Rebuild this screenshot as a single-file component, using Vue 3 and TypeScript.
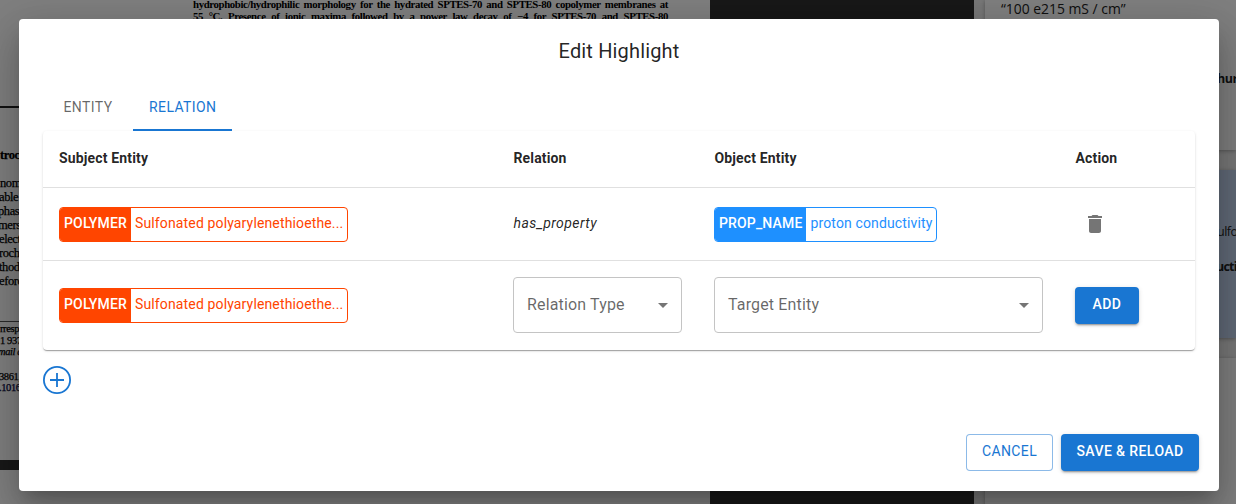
<script setup lang="ts">
interface Tag { kind: string; text: string; tone: string }
interface Fragment { text: string; top: number; left: number; style: string }

const polymer: Tag = { kind: 'POLYMER', text: 'Sulfonated polyarylenethioethe...', tone: 'orange' }
const property: Tag = { kind: 'PROP_NAME', text: 'proton conductivity', tone: 'blue' }

const fragments: Fragment[] = [
  { text: 'troc', top: 147, left: 0, style: 'strong' },
  { text: 'nom', top: 175, left: 0, style: '' },
  { text: 'able', top: 189, left: -1, style: '' },
  { text: 'phas', top: 203, left: -2, style: '' },
  { text: 'mers', top: 217, left: -2, style: '' },
  { text: 'elect', top: 231, left: -1, style: '' },
  { text: 'roch', top: 245, left: -1, style: '' },
  { text: 'thod', top: 259, left: -1, style: '' },
  { text: 'efore', top: 273, left: -1, style: '' },
  { text: 'rresp', top: 322, left: 0, style: 'small' },
  { text: '1 937', top: 334, left: 0, style: 'small' },
  { text: 'mail a', top: 345, left: -2, style: 'small slanted' },
  { text: '3861,', top: 370, left: -1, style: 'small' },
  { text: '.1016', top: 381, left: -1, style: 'small navy' },
]
</script>

<template>
  <div class="screen">
    <div class="backdrop">
      <div class="document">
        <div class="sheet">
          <p class="abstract first">hydrophobic/hydrophilic morphology for the hydrated SPTES-70 and SPTES-80 copolymer membranes at</p>
          <p class="abstract">55 °C. Presence of ionic maxima followed by a power law decay of −4 for SPTES-70 and SPTES-80</p>
          <i class="rule heavy"></i>
          <i class="rule light"></i>
          <span
            v-for="f in fragments" :key="f.top" class="fragment" :class="f.style"
            :style="{ top: f.top + 'px', left: f.left + 'px' }"
          >{{ f.text }}</span>
        </div>
        <div class="sheet next"></div>
      </div>
      <div class="gutter"></div>
      <div class="notes">
        <div class="note one">
          <span class="quote">“100 e215 mS / cm”</span>
          <b class="edge hun">hur</b>
        </div>
        <div class="note two">
          <span class="edge ulf">ulfo</span>
          <b class="edge ucti">ucti</b>
        </div>
        <div class="note three"></div>
      </div>
      <div class="shade"></div>
    </div>

    <section class="dialog">
      <h2>Edit Highlight</h2>
      <div class="content">
        <nav class="tabs">
          <button class="tab">ENTITY</button>
          <button class="tab active">RELATION</button>
        </nav>
        <div class="table">
          <div class="row head">
            <span>Subject Entity</span><span>Relation</span><span>Object Entity</span><span>Action</span>
          </div>
          <div class="row data">
            <div><span class="tag" :class="polymer.tone"><b>{{ polymer.kind }}</b><span>{{ polymer.text }}</span></span></div>
            <em>has_property</em>
            <div><span class="tag" :class="property.tone"><b>{{ property.kind }}</b><span>{{ property.text }}</span></span></div>
            <div>
              <svg class="trash" viewBox="0 0 24 24"><path d="M6 19c0 1.1.9 2 2 2h8c1.1 0 2-.9 2-2V7H6v12zM19 4h-3.5l-1-1h-5l-1 1H5v2h14V4z" /></svg>
            </div>
          </div>
          <div class="row form">
            <div><span class="tag" :class="polymer.tone"><b>{{ polymer.kind }}</b><span>{{ polymer.text }}</span></span></div>
            <div class="select">Relation Type<svg viewBox="0 0 24 24"><path d="M7 10l5 5 5-5z" /></svg></div>
            <div class="select">Target Entity<svg viewBox="0 0 24 24"><path d="M7 10l5 5 5-5z" /></svg></div>
            <div><button class="btn filled add">ADD</button></div>
          </div>
        </div>
        <svg class="plus" viewBox="0 0 28 28">
          <circle cx="14" cy="14" r="13.1" />
          <path d="M14 7v14M7 14h14" />
        </svg>
      </div>
      <footer>
        <button class="btn outlined">CANCEL</button>
        <button class="btn filled save">SAVE &amp; RELOAD</button>
      </footer>
    </section>
  </div>
</template>

<style>
body { margin: 0; overflow: hidden; }
</style>

<style scoped>
* { box-sizing: border-box; }
.screen { position: relative; width: 1236px; height: 504px; overflow: hidden; font-family: Roboto, "Liberation Sans", sans-serif; color: rgba(0, 0, 0, 0.87); }
.backdrop { position: absolute; inset: 0; display: flex; background: #fff; }
.shade { position: absolute; inset: 0; background: rgba(0, 0, 0, 0.5); }
.document { width: 710px; display: flex; flex-direction: column; gap: 10px; background: #303030; }
.sheet { position: relative; height: 460px; background: #fff; overflow: hidden; }
.sheet.next { height: 34px; }
.abstract { margin: 0 0 0 193px; width: 475px; height: 12px; font: bold 10.8px/12px "Liberation Serif", serif; letter-spacing: -0.37px; color: #000; text-align: justify; text-align-last: justify; }
.abstract.first { margin-top: -2px; }
.rule { position: absolute; left: 0; width: 40px; }
.rule.heavy { top: 106px; height: 2px; background: #222; }
.rule.light { top: 321px; height: 1px; background: #555; }
.fragment { position: absolute; font: 12.5px/16px "Liberation Serif", serif; letter-spacing: -0.4px; color: #000; white-space: nowrap; -webkit-text-stroke: 0.25px #000; }
.fragment.strong { font-weight: bold; }
.fragment.small { font-size: 10.5px; line-height: 14px; letter-spacing: -0.4px; }
.fragment.slanted { font-style: italic; }
.fragment.navy { color: #000070; }
.gutter { width: 264px; background: #303030; }
.notes { flex: 1; padding-left: 11px; background: #f0f0f0; font-family: "Open Sans", "Noto Sans", sans-serif; font-size: 12.5px; color: #222; }
.note { position: relative; background: #fff; box-shadow: 0 1px 4px rgba(0, 0, 0, 0.3); }
.note.one { height: 150px; }
.note.two { height: 168px; margin-top: 20px; background: #c3d4f0; }
.note.three { height: 150px; margin-top: 20px; }
.quote { position: absolute; left: 16px; top: 0; font-size: 13.9px; line-height: 18px; white-space: nowrap; }
.edge { position: absolute; left: 232px; white-space: nowrap; line-height: 18px; letter-spacing: -0.5px; }
.hun { top: 70px; }
.ulf { top: 53px; }
.ucti { top: 88px; left: 231px; letter-spacing: -0.8px; }

.dialog { position: absolute; left: 19px; top: 19px; width: 1200px; height: 472px; display: flex; flex-direction: column; background: #fff; border-radius: 4px; box-shadow: 0 11px 15px -7px rgba(0, 0, 0, 0.2), 0 24px 38px 3px rgba(0, 0, 0, 0.14), 0 9px 46px 8px rgba(0, 0, 0, 0.12); }
h2 { margin: 0; height: 64px; padding-top: 16px; font-size: 20px; font-weight: 400; line-height: 32px; letter-spacing: 0.15px; text-align: center; }
.content { flex: 1; padding: 0 24px; }
.tabs { display: flex; height: 48px; }
.tab { height: 48px; padding: 0 16px; border: 0; background: none; font: 400 14px/20px Roboto, sans-serif; letter-spacing: 0.4px; color: rgba(0, 0, 0, 0.6); width: 90px; }
.tab.active { width: 99px; color: #1976d2; border-bottom: 2px solid #1976d2; padding-top: 2px; }
.table { height: 219px; border-radius: 4px; box-shadow: 0 2px 1px -1px rgba(0, 0, 0, 0.2), 0 1px 1px rgba(0, 0, 0, 0.14), 0 1px 3px rgba(0, 0, 0, 0.12); }
.row { display: grid; grid-template-columns: 422px 169px 329px 88px; column-gap: 32px; padding: 0 16px; align-items: center; font-size: 14px; line-height: 20px; letter-spacing: 0.15px; }
.row > div { display: flex; }
.head { height: 57px; font-weight: 700; border-bottom: 1px solid #e0e0e0; padding-bottom: 2px; }
.head span + span { padding-left: 0.5px; }
.data { height: 73px; border-bottom: 1px solid #e0e0e0; }
.data em { letter-spacing: 0.42px; padding: 0 0 2px 0.5px; }
.form { height: 89px; padding-bottom: 1px; }
.tag { display: inline-flex; height: 35px; border: 1px solid; border-radius: 4px; overflow: hidden; line-height: 31px; white-space: nowrap; }
.tag b { padding: 0 4px; font-weight: 500; color: #fff; }
.tag span { padding: 0 3.6px 0 4px; letter-spacing: 0.14px; }
.orange { color: #ff4500; width: 289px; }
.orange b { background: #ff4500; }
.blue { color: #1e90ff; }
.blue b { background: #1e90ff; }
.trash { width: 24px; height: 24px; margin-left: 8px; fill: #757575; }
.form .tag { margin-top: 1px; }
.select { height: 56px; align-items: center; justify-content: space-between; padding: 0 6px 0 13px; border: 1px solid #c4c4c4; border-radius: 4px; font-size: 16px; color: rgba(0, 0, 0, 0.6); }
.select svg { width: 24px; height: 24px; fill: #757575; }
.btn { display: block; height: 37px; padding: 0 0 3px; border: 0; border-radius: 4px; font: 500 14px/24px Roboto, sans-serif; letter-spacing: 0.4px; }
.filled { color: #fff; background: #1976d2; box-shadow: 0 3px 1px -2px rgba(0, 0, 0, 0.2), 0 2px 2px rgba(0, 0, 0, 0.14), 0 1px 5px rgba(0, 0, 0, 0.12); }
.add { width: 64px; margin-top: 1px; }
.save { width: 138px; }
.outlined { width: 87px; color: #1976d2; background: #fff; border: 1px solid rgba(25, 118, 210, 0.5); font-weight: 400; }
.plus { display: block; width: 28px; height: 28px; margin-top: 16px; fill: none; stroke: #1976d2; stroke-width: 1.8; }
footer { display: flex; justify-content: flex-end; gap: 8px; padding: 0 20px 20px; }
</style>
